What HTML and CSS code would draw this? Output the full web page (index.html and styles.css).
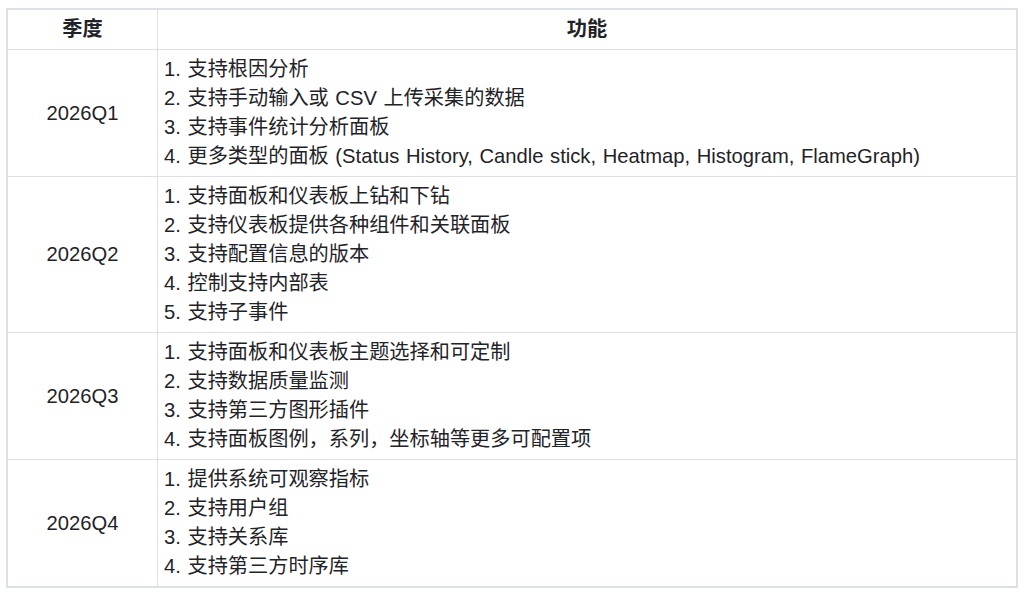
FILE: index.html
```html
<!DOCTYPE html>
<html lang="zh-CN">
<head>
<meta charset="utf-8">
<title>Roadmap</title>
<link rel="stylesheet" href="styles.css">
</head>
<body>
<table class="roadmap">
  <thead>
    <tr><th class="q">季度</th><th>功能</th></tr>
  </thead>
  <tbody>
    <tr>
      <td class="q">2026Q1</td>
      <td>1. 支持根因分析<br>2. 支持手动输入或 CSV 上传采集的数据<br>3. 支持事件统计分析面板<br>4. 更多类型的面板 (Status History, Candle stick, Heatmap, Histogram, FlameGraph)</td>
    </tr>
    <tr>
      <td class="q">2026Q2</td>
      <td>1. 支持面板和仪表板上钻和下钻<br>2. 支持仪表板提供各种组件和关联面板<br>3. 支持配置信息的版本<br>4. 控制支持内部表<br>5. 支持子事件</td>
    </tr>
    <tr>
      <td class="q">2026Q3</td>
      <td>1. 支持面板和仪表板主题选择和可定制<br>2. 支持数据质量监测<br>3. 支持第三方图形插件<br>4. 支持面板图例，系列，坐标轴等更多可配置项</td>
    </tr>
    <tr>
      <td class="q">2026Q4</td>
      <td>1. 提供系统可观察指标<br>2. 支持用户组<br>3. 支持关系库<br>4. 支持第三方时序库</td>
    </tr>
  </tbody>
</table>
</body>
</html>
```

FILE: styles.css
```css
html, body {
  margin: 0;
  background: #ffffff;
}
body {
  padding: 8px 6px;
  font-family: "Liberation Sans", "Noto Sans CJK SC", sans-serif;
  font-size: 20.2px;
  line-height: 29px;
  color: #1f2328;
}
.roadmap {
  width: 1012px;
  border-collapse: collapse;
  border: 2px solid #dde1e5;
}
.roadmap th,
.roadmap td {
  border: 1px solid #dde1e5;
  padding: 5px 6px;
  text-align: left;
  vertical-align: middle;
  word-spacing: 1px;
}
.roadmap th {
  text-align: center;
  font-weight: 700;
}
.roadmap .q {
  width: 137px;
  text-align: center;
}
```
